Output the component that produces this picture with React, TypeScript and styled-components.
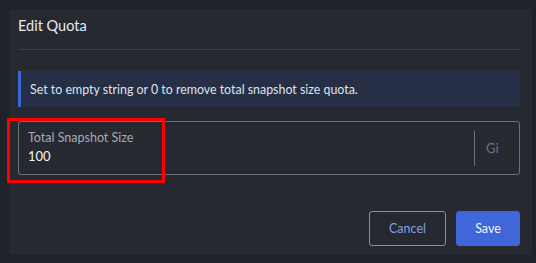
import React from 'react'
import styled, { createGlobalStyle } from 'styled-components'

const GlobalStyle = createGlobalStyle`
  html, body {
    margin: 0;
    padding: 0;
    background: #1f2228;
    font-family: Lato, "Liberation Sans", sans-serif;
  }
`

const Page = styled.div`
  width: 536px;
  height: 263px;
  padding: 9px 0 0 9px;
  box-sizing: border-box;
`

const Dialog = styled.div`
  position: relative;
  width: 523px;
  height: 246px;
  background: #262930;
  padding: 0 12px 0 9px;
  box-sizing: border-box;
  display: flex;
  flex-direction: column;
`

const Header = styled.div`
  height: 41px;
  display: flex;
  align-items: flex-start;
  border-bottom: 1px solid #3b3e46;
  font-size: 14.5px;
  line-height: 17px;
  color: #e8eaee;
  padding-top: 8px;
  box-sizing: border-box;
`

const Notice = styled.div`
  margin-top: 21px;
  height: 36px;
  display: flex;
  align-items: center;
  background: #262f45;
  border-left: 3px solid #3c66d6;
  padding-left: 9px;
  font-size: 12.4px;
  color: #dfe3ea;
`

const Field = styled.div`
  margin-top: 14px;
  height: 54px;
  border: 1px solid #6b7079;
  border-radius: 3px;
  display: flex;
  align-items: center;
  box-sizing: border-box;
`

const FieldBody = styled.div`
  flex: 1;
  padding-left: 9px;
  display: flex;
  flex-direction: column;
  gap: 4px;
  margin-top: -3px;
`

const Label = styled.span`
  font-size: 12.5px;
  line-height: 15px;
  color: #a4a9b3;
`

const Value = styled.span`
  font-size: 13px;
  line-height: 15px;
  color: #f2f4f7;
`

const Unit = styled.div`
  width: 45px;
  height: 35px;
  border-left: 1px solid #6b7079;
  display: flex;
  align-items: center;
  padding-left: 11px;
  box-sizing: border-box;
  font-size: 13px;
  color: #6f747d;
`

const Footer = styled.div`
  margin-top: 36px;
  display: flex;
  justify-content: flex-end;
  gap: 10px;
`

const Button = styled.button<{ $primary?: boolean }>`
  height: 35px;
  width: ${(p) => (p.$primary ? '64px' : '77px')};
  padding: 0;
  border-radius: 3px;
  font-family: inherit;
  font-size: 12.5px;
  box-sizing: border-box;
  border: 1px solid ${(p) => (p.$primary ? '#4066d9' : '#6a91ec')};
  background: ${(p) => (p.$primary ? '#4066d9' : 'transparent')};
  color: ${(p) => (p.$primary ? '#f3f5fb' : '#7ea0ea')};
`

const Highlight = styled.div`
  position: absolute;
  left: -2px;
  top: 109px;
  width: 158px;
  height: 65px;
  border: 3px solid #ff0000;
  box-sizing: border-box;
  pointer-events: none;
`

export default function App() {
  return (
    <>
      <GlobalStyle />
      <Page>
        <Dialog>
          <Header>Edit Quota</Header>
          <Notice>Set to empty string or 0 to remove total snapshot size quota.</Notice>
          <Field>
            <FieldBody>
              <Label>Total Snapshot Size</Label>
              <Value>100</Value>
            </FieldBody>
            <Unit>Gi</Unit>
          </Field>
          <Footer>
            <Button>Cancel</Button>
            <Button $primary>Save</Button>
          </Footer>
          <Highlight />
        </Dialog>
      </Page>
    </>
  )
}
